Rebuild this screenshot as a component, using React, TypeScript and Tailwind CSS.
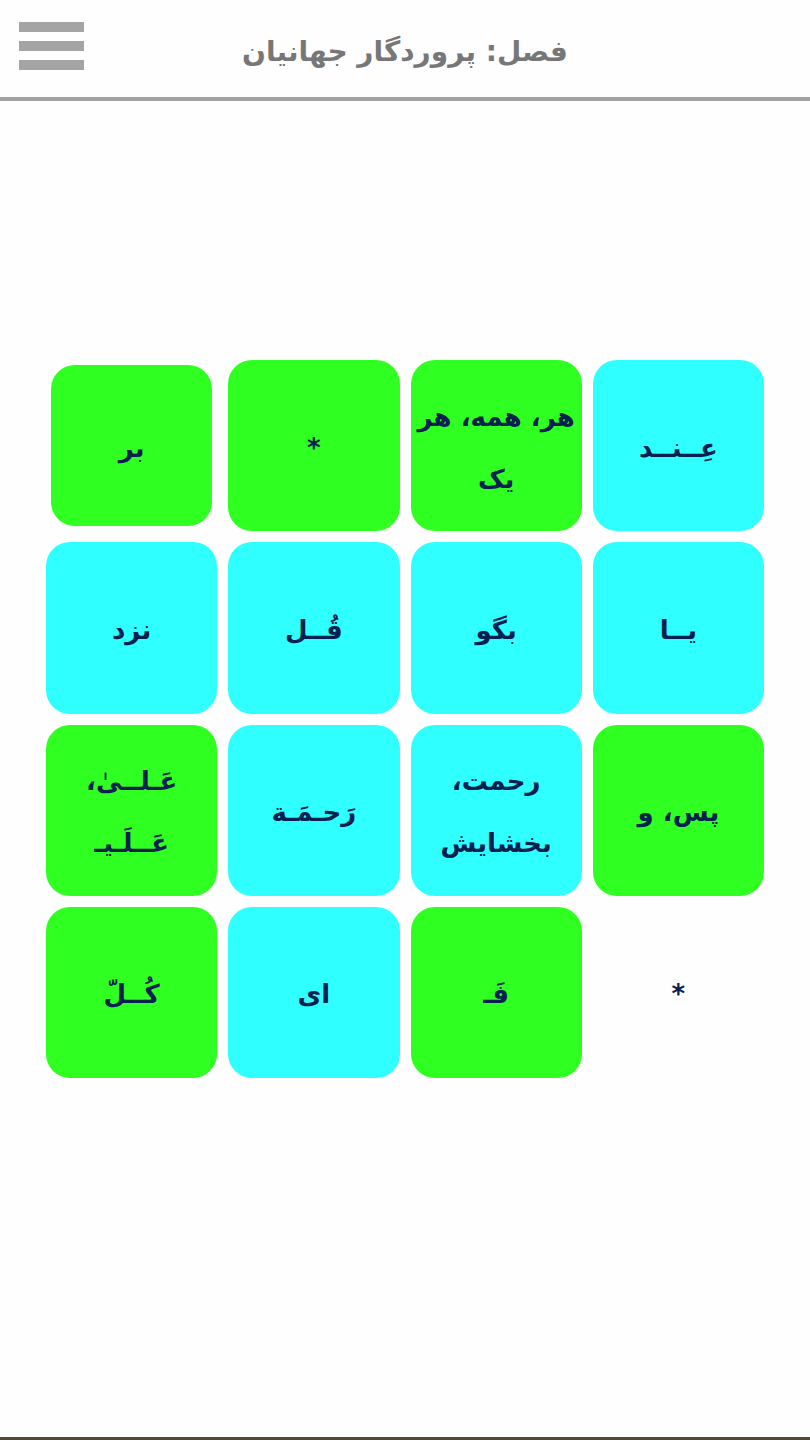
type Tone = "green" | "cyan" | "blank";

type Card = {
  lines: string[];
  tone: Tone;
  pressed?: boolean;
};

const cards: Card[] = [
  { lines: ["بر"], tone: "green", pressed: true },
  { lines: ["*"], tone: "green" },
  { lines: ["هر، همه، هر", "یک"], tone: "green" },
  { lines: ["عِــنــد"], tone: "cyan" },
  { lines: ["نزد"], tone: "cyan" },
  { lines: ["قُــل"], tone: "cyan" },
  { lines: ["بگو"], tone: "cyan" },
  { lines: ["یــا"], tone: "cyan" },
  { lines: ["عَـلــیٰ،", "عَــلَـیـ"], tone: "green" },
  { lines: ["رَحـمَـة"], tone: "cyan" },
  { lines: ["رحمت،", "بخشایش"], tone: "cyan" },
  { lines: ["پس، و"], tone: "green" },
  { lines: ["کُــلّ"], tone: "green" },
  { lines: ["ای"], tone: "cyan" },
  { lines: ["فَـ"], tone: "green" },
  { lines: ["*"], tone: "blank" },
];

const tones: Record<Tone, string> = {
  green: "bg-[#30ff22]",
  cyan: "bg-[#30ffff]",
  blank: "bg-transparent",
};

function WordCard({ card }: { card: Card }) {
  return (
    <div className={card.pressed ? "aspect-square p-[5px]" : "aspect-square"}>
      <button
        type="button"
        dir="rtl"
        lang="fa"
        className={`flex h-full w-full flex-col items-center justify-center rounded-3xl pt-1 text-[26px] leading-[62px] font-bold whitespace-nowrap text-[#06204f] ${tones[card.tone]}`}
      >
        {card.lines.map((line) => (
          <span key={line} className="block">
            {line}
          </span>
        ))}
      </button>
    </div>
  );
}

export default function App() {
  return (
    <div className="flex min-h-screen flex-col border-b-3 border-[#57493a] bg-[#fefefe] font-['DejaVu_Sans',sans-serif]">
      <header className="grid grid-cols-[1fr_auto_1fr] items-center border-b-4 border-[#a2a2a2] px-[19px]">
        <button
          type="button"
          aria-label="منو"
          className="flex w-[65px] flex-col gap-[9px] pb-[5px]"
        >
          <span className="h-[10px] w-full bg-[#a4a4a4]" />
          <span className="h-[10px] w-full bg-[#a4a4a4]" />
          <span className="h-[10px] w-full bg-[#a4a4a4]" />
        </button>
        <h1 dir="rtl" lang="fa" className="pt-[7px] text-[28px] leading-[90px] font-bold text-[#777777]">
          فصل: پروردگار جهانیان
        </h1>
      </header>
      <main className="flex flex-1 flex-col justify-center px-[46px] pb-[100px]">
        <div className="grid grid-cols-4 gap-[11px]">
          {cards.map((card, index) => (
            <WordCard key={index} card={card} />
          ))}
        </div>
      </main>
    </div>
  );
}
